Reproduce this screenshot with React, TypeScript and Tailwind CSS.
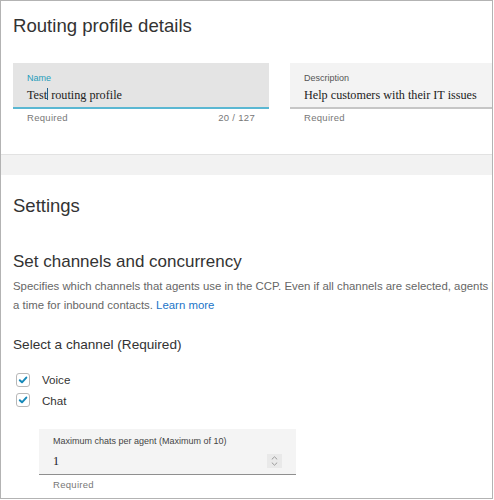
import { ReactNode } from "react";

type FieldProps = {
  label: string;
  value: ReactNode;
  active?: boolean;
  hint: string;
  counter?: string;
};

const TextField = ({ label, value, active, hint, counter }: FieldProps) => (
  <div className="w-[256px] shrink-0">
    <div
      className={
        active
          ? "h-[46px] bg-[#e4e4e4] border-b-2 border-[#5ab7d2] pl-[14px] pr-[14px] pt-[9px]"
          : "h-[46px] bg-[#f3f3f3] border-b-2 border-[#c6c6c6] pl-[14px] pr-[14px] pt-[9px]"
      }
    >
      <div
        className={
          active
            ? "text-[9px] leading-[12px] text-[#1f9dbb] font-medium"
            : "text-[9px] leading-[12px] text-[#555]"
        }
      >
        {label}
      </div>
      <div className="mt-[3px] text-[12.2px] leading-[16px] text-[#222] font-['Liberation_Serif',serif] whitespace-nowrap">
        {value}
      </div>
    </div>
    <div className="mt-[3px] px-[14px] flex justify-between text-[9.5px] leading-[12px] tracking-[0.3px] text-[#777]">
      <span>{hint}</span>
      {counter && <span>{counter}</span>}
    </div>
  </div>
);

const Check = ({ label }: { label: string }) => (
  <div className="h-[20.5px] flex items-center ml-[3px]">
    <span className="w-[14px] h-[14px] rounded-[3px] border border-[#b8b8b8] bg-white flex items-center justify-center">
      <svg width="10" height="10" viewBox="0 0 10 10" fill="none">
        <path
          d="M1.8 5.2 L4 7.3 L8.3 2.6"
          stroke="#1689b9"
          strokeWidth="2"
          strokeLinecap="round"
          strokeLinejoin="round"
        />
      </svg>
    </span>
    <span className="ml-[12px] text-[11.6px] text-[#333]">{label}</span>
  </div>
);

const Spinner = () => (
  <span className="w-[15px] h-[14px] bg-[#e9e9e9] flex flex-col items-center justify-center gap-[2px]">
    <svg width="7" height="4" viewBox="0 0 7 4" fill="none">
      <path d="M0.8 3.4 L3.5 0.8 L6.2 3.4" stroke="#9a9a9a" strokeWidth="1" />
    </svg>
    <svg width="7" height="4" viewBox="0 0 7 4" fill="none">
      <path d="M0.8 0.6 L3.5 3.2 L6.2 0.6" stroke="#9a9a9a" strokeWidth="1" />
    </svg>
  </span>
);

export default function App() {
  return (
    <div className="w-[493px] h-[499px] border border-[#b3b3b3] bg-white overflow-hidden font-['Liberation_Sans',Arial,sans-serif] text-[#333]">
      {/* Profile details */}
      <section className="px-[12px] pt-[13px] pb-[30px]">
        <h1 className="text-[18.6px] leading-[24px] text-[#333]">
          Routing profile details
        </h1>
        <div className="mt-[25px] flex gap-[21px]">
          <TextField
            label="Name"
            active
            value={
              <>
                Test
                <span className="inline-block w-px h-[12px] bg-[#1d5f8c] align-[-1px]" />{" "}
                routing profile
              </>
            }
            hint="Required"
            counter="20 / 127"
          />
          <TextField
            label="Description"
            value="Help customers with their IT issues"
            hint="Required"
          />
        </div>
      </section>

      <div className="h-[21px] bg-[#f2f2f2] border-t border-[#e2e2e2]" />

      {/* Settings */}
      <section className="px-[12px] pt-[19px]">
        <h2 className="text-[18.5px] leading-[24px] text-[#333]">Settings</h2>
        <h3 className="mt-[33px] text-[17px] leading-[22px] text-[#333]">
          Set channels and concurrency
        </h3>
        <p className="mt-[4px] text-[11.4px] leading-[18.6px] text-[#666] whitespace-nowrap">
          Specifies which channels that agents use in the CCP. Even if all
          channels are selected, agents handle only one voice contact at
          <br />a time for inbound contacts.{" "}
          <a className="text-[#1a74c8]" href="#">
            Learn more
          </a>
        </p>

        <div className="mt-[22px] text-[13.6px] leading-[18px] text-[#333]">
          Select a channel (Required)
        </div>
        <div className="mt-[15.5px]">
          <Check label="Voice" />
          <Check label="Chat" />
        </div>

        <div className="mt-[18px] ml-[26px] w-[257px]">
          <div className="h-[46px] bg-[#f4f4f4] border-b border-[#8f8f8f] pl-[14px] pr-[14px] pt-[6px]">
            <div className="text-[9px] leading-[12px] text-[#444]">
              Maximum chats per agent (Maximum of 10)
            </div>
            <div className="mt-[6px] flex items-center justify-between">
              <span className="text-[12.2px] leading-[16px] text-[#222] font-['Liberation_Serif',serif]">
                1
              </span>
              <Spinner />
            </div>
          </div>
          <div className="mt-[4px] px-[14px] text-[9.5px] leading-[12px] tracking-[0.3px] text-[#777]">
            Required
          </div>
        </div>
      </section>
    </div>
  );
}
